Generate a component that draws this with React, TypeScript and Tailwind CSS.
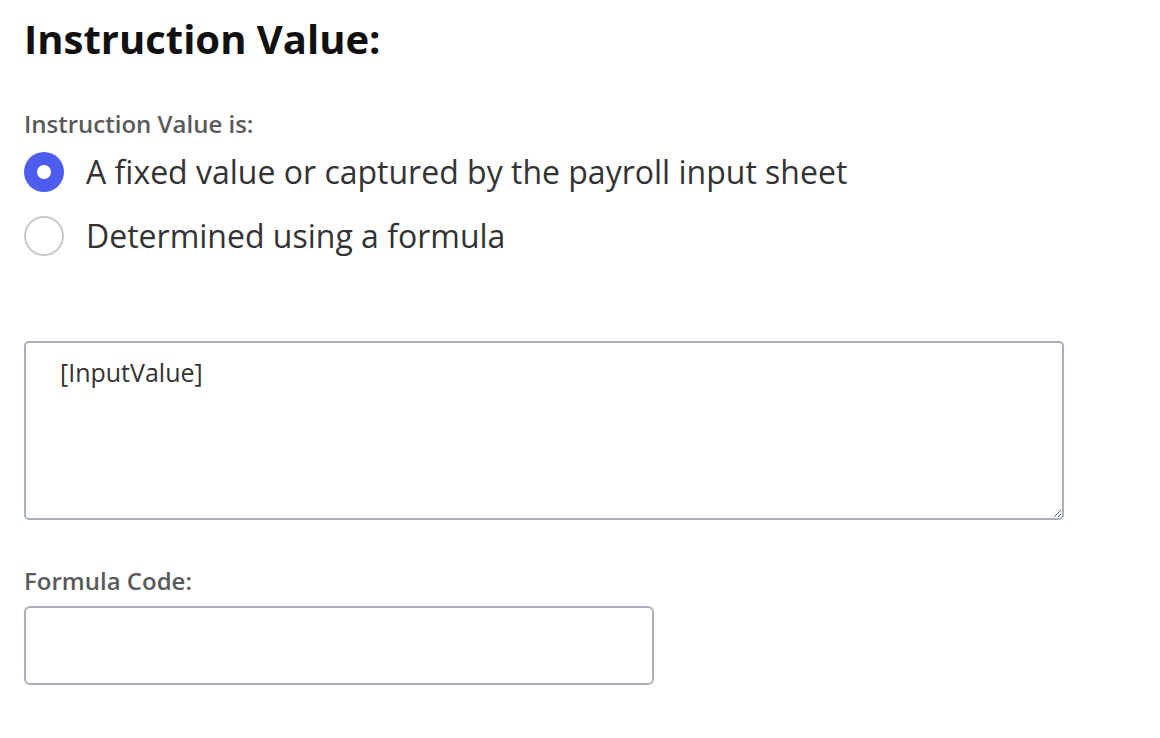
import { useState } from 'react';

const options = [
  { id: 'fixed', label: 'A fixed value or captured by the payroll input sheet' },
  { id: 'formula', label: 'Determined using a formula' },
];

export default function App() {
  const [mode, setMode] = useState('fixed');

  return (
    <div className="min-h-[738px] bg-white pl-[24px] pt-[15px] font-['Open_Sans',sans-serif] text-[#333]">
      {/* TITLE */}
      <h1 className="text-[40px] font-bold leading-[48px] text-[#111]">Instruction Value:</h1>

      {/* RADIOS */}
      <div className="mt-[47px]">
        <div className="text-[24px] font-semibold leading-[28px] text-[#5a5a5a]">Instruction Value is:</div>
        <div className="mt-[2px] flex flex-col">
          {options.map((o) => (
            <label key={o.id} className="flex h-[64px] items-center gap-[22px] cursor-pointer">
              <span
                className={
                  o.id === mode
                    ? 'flex h-[40px] w-[40px] items-center justify-center rounded-full bg-[#4d5df0]'
                    : 'flex h-[40px] w-[40px] items-center justify-center rounded-full border-2 border-[#c4c7cc] bg-white'
                }
                onClick={() => setMode(o.id)}
              >
                {o.id === mode && <span className="h-[14px] w-[14px] rounded-full bg-white" />}
              </span>
              <span className="text-[32px] leading-[40px]">{o.label}</span>
            </label>
          ))}
        </div>
      </div>

      {/* FORMULA TEXT */}
      <textarea
        defaultValue="[InputValue]"
        className="mt-[73px] block h-[179px] w-[1040px] rounded-[5px] border-2 border-[#a9b0b8] px-[34px] py-[13px] text-[25px] leading-[32px] text-[#333] outline-none"
      />

      {/* FORMULA CODE */}
      <div className="mt-[47px]">
        <div className="text-[24px] font-semibold leading-[28px] text-[#5a5a5a]">Formula Code:</div>
        <input className="mt-[11px] block h-[79px] w-[630px] rounded-[6px] border-2 border-[#a9b0b8] px-[16px] text-[24px] outline-none" />
      </div>
    </div>
  );
}
